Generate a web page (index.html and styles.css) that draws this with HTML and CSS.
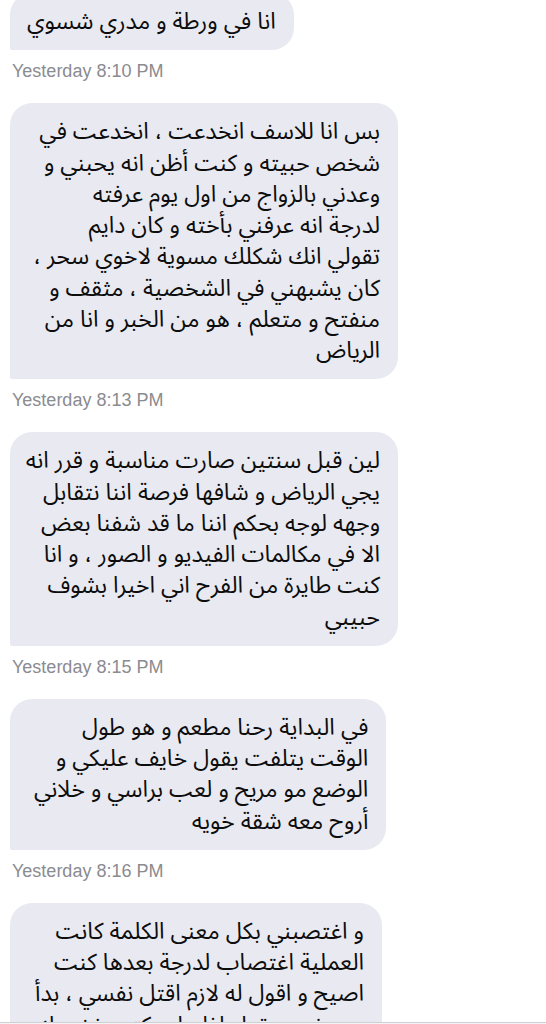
FILE: index.html
```html
<!DOCTYPE html>
<html lang="ar">
<head>
<meta charset="utf-8">
<title>Messages</title>
<link rel="stylesheet" href="styles.css">
</head>
<body>
<main class="thread">
  <div class="bubble first" dir="rtl">انا في ورطة و مدري شسوي</div>
  <div class="time">Yesterday 8:10 PM</div>

  <div class="bubble full" dir="rtl">بس انا للاسف انخدعت ، انخدعت في<br>شخص حبيته و كنت أظن انه يحبني و<br>وعدني بالزواج من اول يوم عرفته<br>لدرجة انه عرفني بأخته و كان دايم<br>تقولي انك شكلك مسوية لاخوي سحر ،<br>كان يشبهني في الشخصية ، مثقف و<br>منفتح و متعلم ، هو من الخبر و انا من<br>الرياض</div>
  <div class="time">Yesterday 8:13 PM</div>

  <div class="bubble full" dir="rtl">لين قبل سنتين صارت مناسبة و قرر انه<br>يجي الرياض و شافها فرصة اننا نتقابل<br>وجهه لوجه بحكم اننا ما قد شفنا بعض<br>الا في مكالمات الفيديو و الصور ، و انا<br>كنت طايرة من الفرح اني اخيرا بشوف<br>حبيبي</div>
  <div class="time">Yesterday 8:15 PM</div>

  <div class="bubble" dir="rtl">في البداية رحنا مطعم و هو طول<br>الوقت يتلفت يقول خايف عليكي و<br>الوضع مو مريح و لعب براسي و خلاني<br>أروح معه شقة خويه</div>
  <div class="time">Yesterday 8:16 PM</div>

  <div class="bubble" dir="rtl">و اغتصبني بكل معنى الكلمة كانت<br>العملية اغتصاب لدرجة بعدها كنت<br>اصيح و اقول له لازم اقتل نفسي ، بدأ<br>يهددني و يقول اذا ما سكتي بفضحك<br>و يقول انه ما راح يتركني</div>
</main>
<div class="toolbar"></div>
</body>
</html>
```

FILE: styles.css
```css
html, body {
  margin: 0;
  padding: 0;
  background: #ffffff;
}

body {
  overflow: hidden;
  height: 1024px;
}

.thread {
  display: flex;
  flex-direction: column;
  align-items: flex-start;
  padding: 0 10px;
}

.bubble {
  box-sizing: border-box;
  background: #e9eaf1;
  color: #0d0d0d;
  font-family: "Noto Sans Arabic", "DejaVu Sans", sans-serif;
  font-size: 23.2px;
  line-height: 31.25px;
  padding: 13px 18px 13px 24px;
  border-radius: 22px 22px 22px 2px;
  text-align: right;
  white-space: nowrap;
}

.bubble.full {
  width: 388px;
}

.bubble.first {
  margin-top: -7px;
  padding-left: 17px;
}

.time {
  font-family: "Liberation Sans", Arial, sans-serif;
  font-size: 18px;
  line-height: 20px;
  color: #8b8b90;
  margin: 11px 0 22px 2px;
}

.toolbar {
  position: fixed;
  left: 0;
  right: 0;
  bottom: 0;
  height: 1px;
  background: #f4f4f6;
  border-top: 1px solid #cfcfd4;
}
```
